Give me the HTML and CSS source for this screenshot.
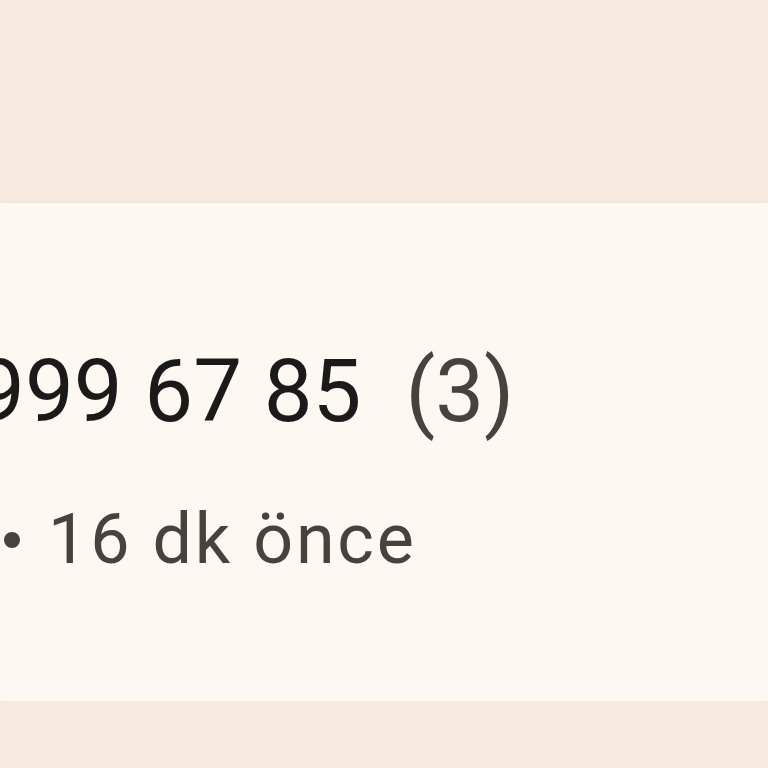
FILE: index.html
```html
<!DOCTYPE html>
<html lang="tr">
<head>
<meta charset="utf-8">
<title>Arama kaydı</title>
<link rel="stylesheet" href="styles.css">
</head>
<body>
<div class="page">
  <div class="top-band"></div>
  <div class="call-card">
    <div class="call-title"><span class="number">999 67 85</span><span class="count">(3)</span></div>
    <div class="call-meta"><span class="dot"></span><span class="time">16 dk önce</span></div>
  </div>
</div>
</body>
</html>
```
FILE: styles.css
```css
html, body {
  margin: 0;
  padding: 0;
}
body {
  background: #f7ebdf;
  font-family: Roboto, "Noto Sans", sans-serif;
  overflow: hidden;
}
.page {
  width: 768px;
  height: 768px;
  overflow: hidden;
}
.top-band {
  height: 203px;
}
.call-card {
  height: 498px;
  box-sizing: border-box;
  background: #fdf8f2;
  padding-top: 138px;
  box-shadow: 0 -1px 3px rgba(180, 150, 120, 0.12);
}
.call-title {
  display: flex;
  align-items: baseline;
  margin-left: -24px;
  font-size: 87px;
  line-height: 100px;
  white-space: nowrap;
  color: #1c1a18;
}
.count {
  margin-left: 44px;
  color: #47423d;
}
.call-meta {
  display: flex;
  align-items: center;
  margin-top: 58px;
  font-size: 70px;
  line-height: 80px;
  white-space: nowrap;
  color: #47423d;
}
.dot {
  width: 16px;
  height: 16px;
  border-radius: 50%;
  background: #47423d;
  margin-left: 4px;
  margin-right: 28px;
  margin-top: 2px;
}
.time {
  letter-spacing: 2.8px;
}
```
